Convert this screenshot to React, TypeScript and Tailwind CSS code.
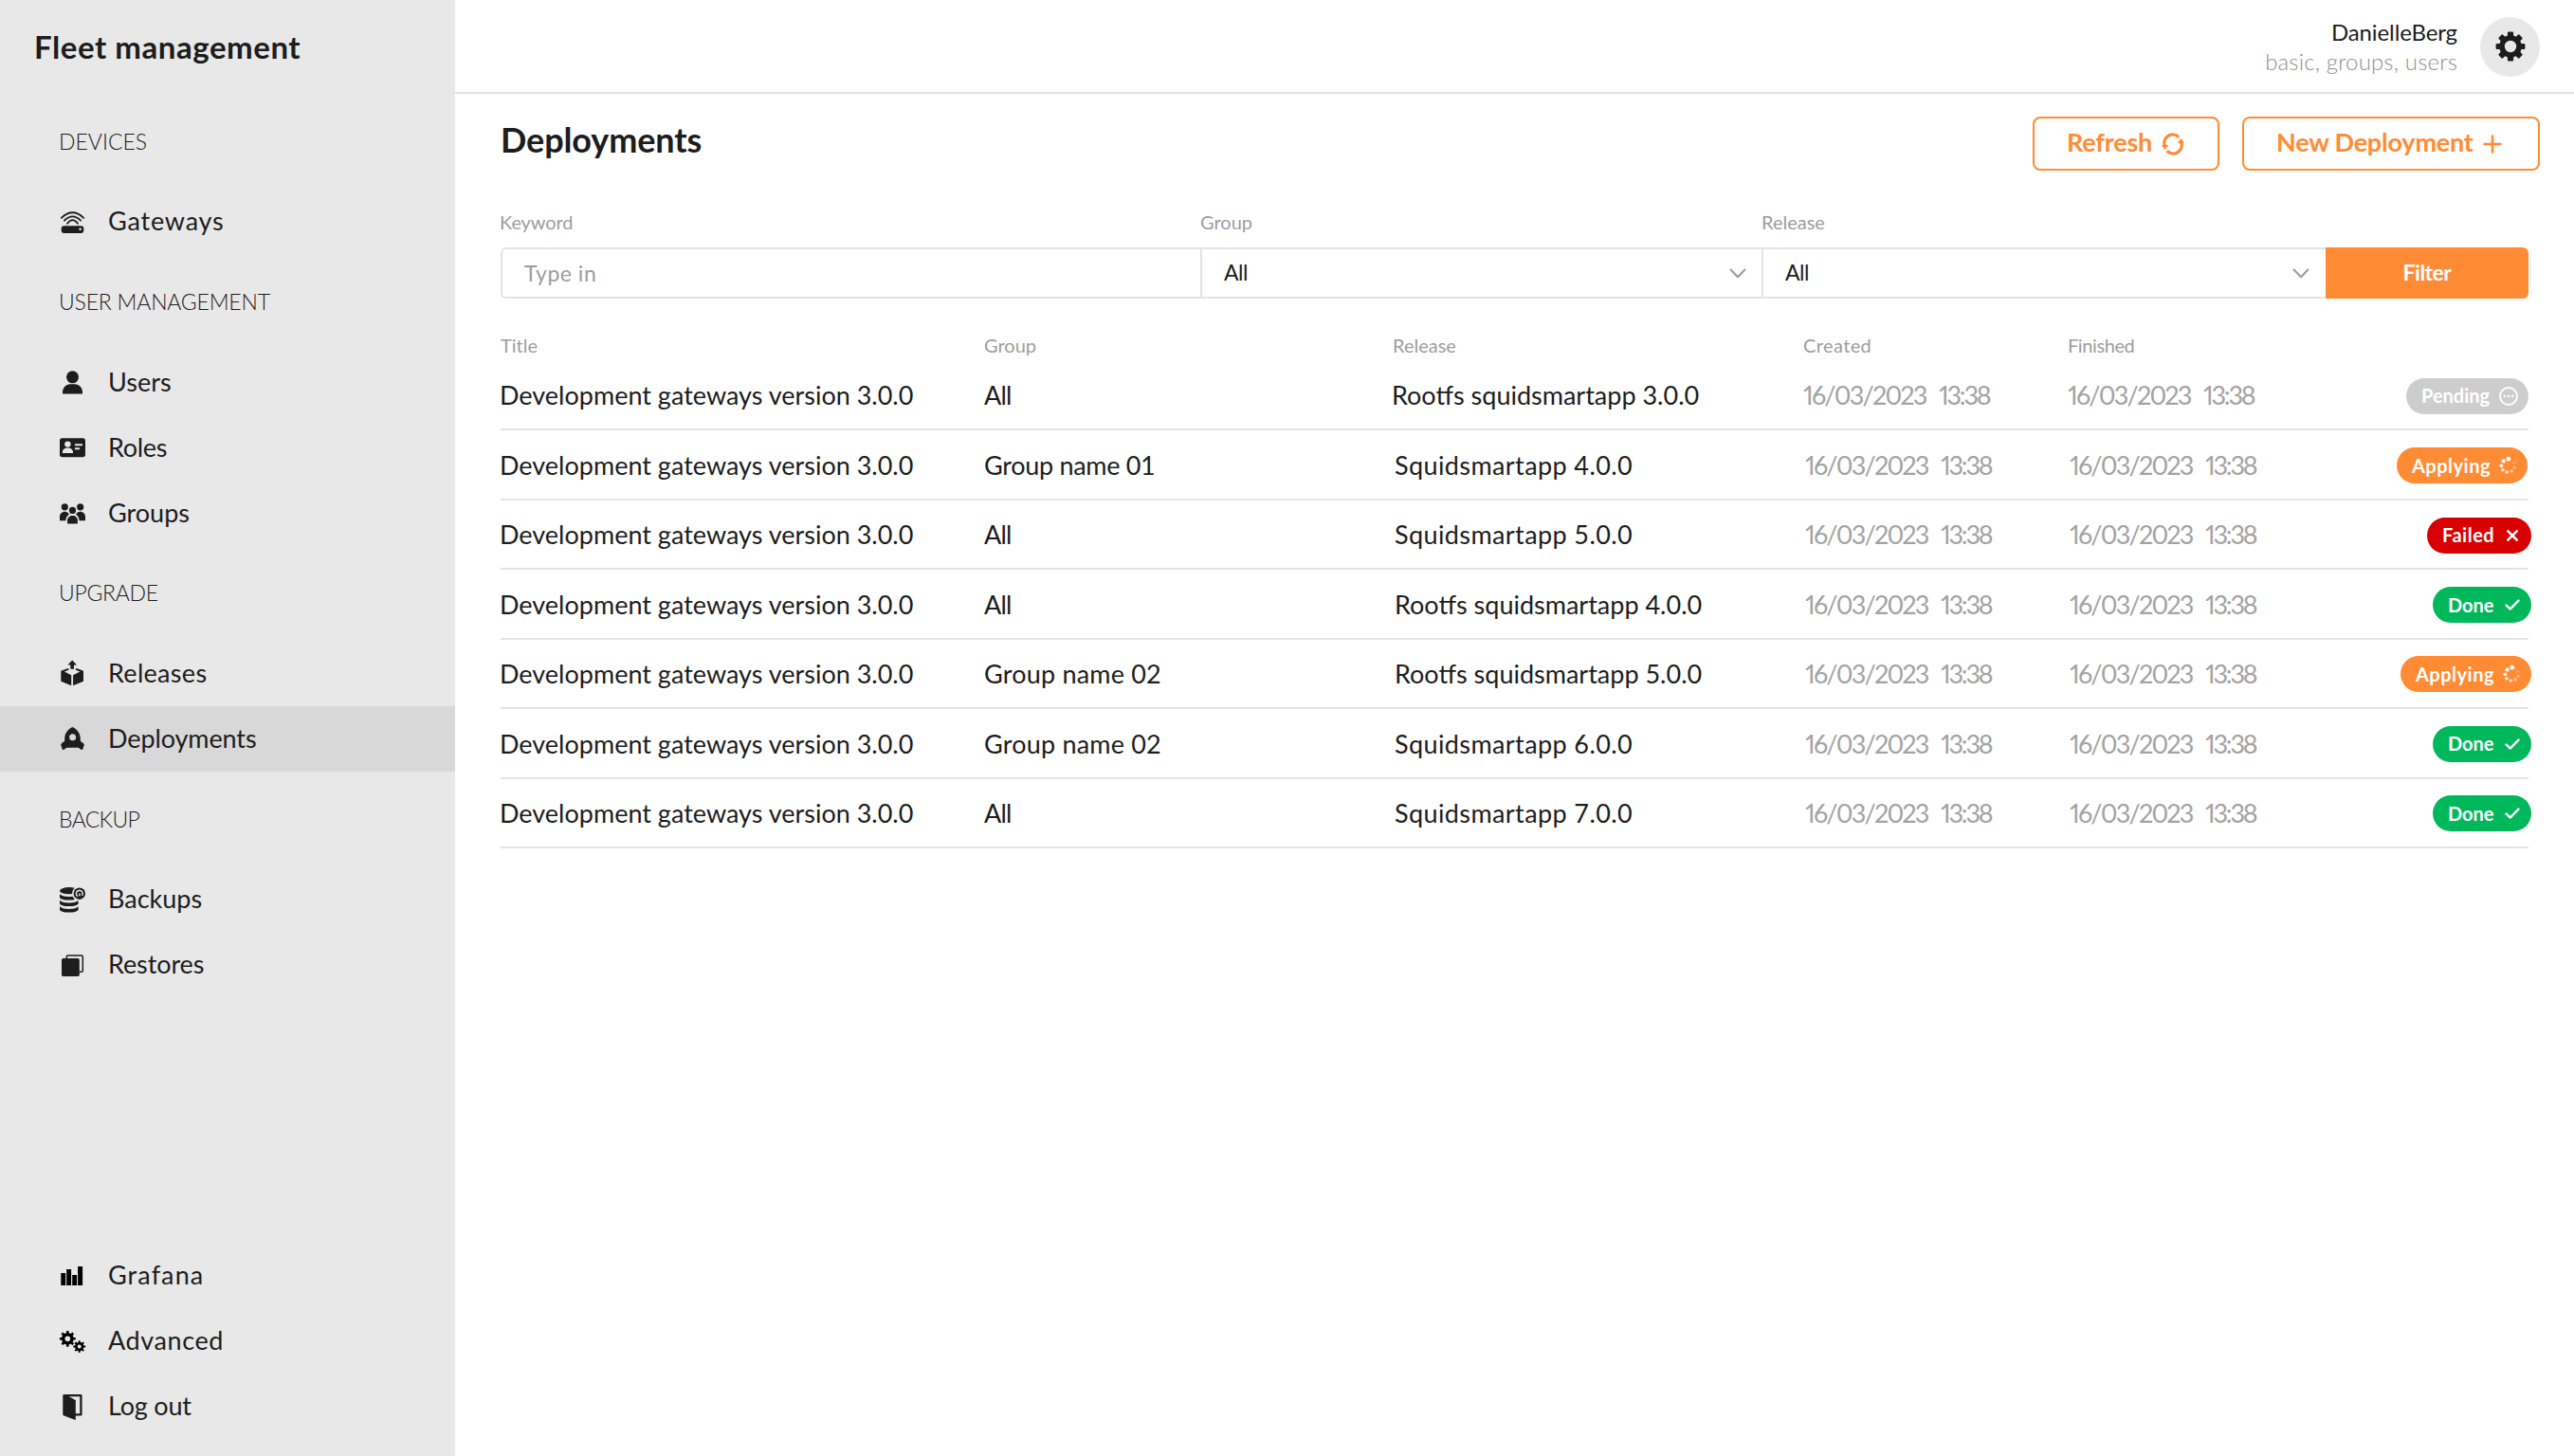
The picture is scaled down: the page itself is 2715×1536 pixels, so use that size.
import type { ReactNode } from "react";

function Icon({ children, black = false }: { children: ReactNode; black?: boolean }) {
  return (
    <svg viewBox="0 0 34 34" className={`h-[34px] w-[34px] shrink-0 ${black ? "text-black" : "text-[#1d1d1d]"}`} fill="currentColor">
      {children}
    </svg>
  );
}

function Gear({ cx, cy, r, body, hole, tooth, holeFill }: { cx: number; cy: number; r: number; body: number; hole: number; tooth: number; holeFill: string }) {
  return (
    <g transform={`translate(${cx} ${cy})`}>
      {[0, 45, 90, 135].map((a) => (
        <rect key={a} x={-tooth / 2} y={-r} width={tooth} height={r * 2} rx={tooth * 0.2} transform={`rotate(${a})`} />
      ))}
      <circle r={body} />
      <circle r={hole} fill={holeFill} />
    </g>
  );
}

const GatewayIcon = (
  <Icon>
    <g fill="none" stroke="currentColor" strokeWidth="1.8" strokeLinecap="round">
      <path d="M4.8 12.8Q16.5 1.7 28.2 12.8" />
      <path d="M7.9 15.7Q16.5 7 25.1 15.7" />
      <path d="M11 18.8Q16.5 11.4 22 18.8" />
    </g>
    <rect x="4.7" y="21.3" width="23.6" height="7.7" rx="3" />
    <circle cx="24.6" cy="24.8" r="1.3" fill="#e8e8e8" />
  </Icon>
);

const UserIcon = (
  <Icon>
    <circle cx="16.5" cy="11.8" r="6.5" />
    <path d="M6 29.6V28C6 22.8 9.6 19.3 14 19.3H19C23.4 19.3 27 22.8 27 28V29.6Z" />
  </Icon>
);

const RoleIcon = (
  <Icon>
    <rect x="3" y="7.2" width="27" height="20" rx="2.7" />
    <g fill="#e8e8e8">
      <circle cx="11.4" cy="13.6" r="3.2" />
      <path d="M5.8 23V22C5.8 19.4 8 17.4 11.4 17.4S17 19.4 17 22V23Z" />
      <rect x="18.9" y="13.3" width="8.2" height="1.9" rx=".6" />
      <rect x="18.9" y="17.3" width="5.2" height="1.9" rx=".6" />
    </g>
  </Icon>
);

const GroupIcon = (
  <Icon>
    <circle cx="8.3" cy="10.8" r="3.6" />
    <circle cx="24.7" cy="10.8" r="3.6" />
    <circle cx="16.5" cy="14.4" r="3.6" />
    <path d="M3 25.2V21.5C3 18 5.4 15.8 8.4 15.8C10.2 15.8 11.4 16.5 12.4 17.8C13 18.5 12.8 19 12 19.6C10.4 20.8 9.5 22.7 9.4 25.2Z" />
    <path d="M30 25.2V21.5C30 18 27.6 15.8 24.6 15.8C22.8 15.8 21.6 16.5 20.6 17.8C20 18.5 20.2 19 21 19.6C22.6 20.8 23.5 22.7 23.6 25.2Z" />
    <path d="M11.1 28.6V25C11.1 22 13.4 20 16.5 20S21.9 22 21.9 25V28.6Z" />
  </Icon>
);

const ReleaseIcon = (
  <Icon>
    <path d="M16.2 3.6L21 8.5H18V12.8H14.3V8.5H11.4Z" />
    <path d="M4.3 14.8L11.6 12L13 13.4L8 15.6L15.2 19.2V30.2L4.3 25.7Z" />
    <path d="M28 14.8L20.7 12L19.3 13.4L24.3 15.6L17.1 19.2V30.2L28 25.7Z" />
  </Icon>
);

const RocketIcon = (
  <Icon>
    <path d="M16.5 5C20.5 6.6 24.8 11 24.8 17.4V19.8L28.3 22.6Q29 23.3 28.7 24.2L27.3 28.2Q26.7 29.6 25.4 28.8L22.7 26.7H10.3L7.6 28.8Q6.3 29.6 5.7 28.2L4.3 24.2Q4 23.3 4.7 22.6L8.2 19.8V17.4C8.2 11 12.5 6.6 16.5 5Z" />
    <circle cx="16.6" cy="15.8" r="3.5" fill="#d8d8d8" />
  </Icon>
);

const BackupIcon = (
  <Icon>
    <ellipse cx="12.8" cy="7.7" rx="9.8" ry="3.6" />
    {[11.2, 17.8, 24.2].map((y) => (
      <path key={y} transform={`translate(0 ${y})`} d="M3 0C5 2.2 9 2.7 12.8 2.7S20.6 2.2 22.6 0V3.2C22.6 5.2 18 6.3 12.8 6.3S3 5.2 3 3.2Z" />
    ))}
    <circle cx="23.8" cy="10.7" r="7.7" fill="#e8e8e8" />
    <circle cx="23.8" cy="10.7" r="6.2" />
    <path d="M21.9 13.6A3.4 3.4 0 1 1 26.5 12.7M23.9 10.4V13.2" fill="none" stroke="#e8e8e8" strokeWidth="1.5" />
  </Icon>
);

const RestoreIcon = (
  <Icon>
    <rect x="5" y="10" width="18.8" height="19" rx="1.7" />
    <path d="M10.3 10V8.2Q10.3 6.9 11.6 6.9H26Q27.3 6.9 27.3 8.2V22.9Q27.3 24.2 26 24.2H23.8" fill="none" stroke="currentColor" strokeWidth="1.5" />
  </Icon>
);

const GrafanaIcon = (
  <Icon black>
    <path d="M4.3 14H9.2V27H4.3ZM10.2 10H15.1V27H10.2ZM16.2 16H21.1V27H16.2ZM22.1 7H27.1V27H22.1Z" />
  </Icon>
);

const AdvancedIcon = (
  <Icon black>
    <Gear cx={11.3} cy={14.3} r={8.4} body={6.3} hole={2.8} tooth={2.6} holeFill="#e8e8e8" />
    <Gear cx={23.7} cy={22.6} r={6.4} body={4.7} hole={2} tooth={2} holeFill="#e8e8e8" />
  </Icon>
);

const LogoutIcon = (
  <Icon>
    <path d="M7.4 5.2H25.4V25.4H19" fill="none" stroke="currentColor" strokeWidth="2.3" strokeLinejoin="round" />
    <path d="M6.3 4.3L12 5.8L19.8 10.3V30.2Q19.8 31.3 18.8 30.8L7 26.3Q6.3 26 6.3 25.2Z" />
  </Icon>
);

type Item = { label: string; icon: ReactNode; track: string; active?: boolean };

const sections: { title: string; track: string; items: Item[] }[] = [
  { title: "DEVICES", track: "", items: [{ label: "Gateways", icon: GatewayIcon, track: "tracking-[0.8px]" }] },
  {
    title: "USER MANAGEMENT",
    track: "tracking-[-0.2px]",
    items: [
      { label: "Users", icon: UserIcon, track: "" },
      { label: "Roles", icon: RoleIcon, track: "tracking-[-0.3px]" },
      { label: "Groups", icon: GroupIcon, track: "" },
    ],
  },
  {
    title: "UPGRADE",
    track: "tracking-[-0.3px]",
    items: [
      { label: "Releases", icon: ReleaseIcon, track: "tracking-[0.3px]" },
      { label: "Deployments", icon: RocketIcon, track: "tracking-[-0.1px]", active: true },
    ],
  },
  {
    title: "BACKUP",
    track: "tracking-[-0.7px]",
    items: [
      { label: "Backups", icon: BackupIcon, track: "" },
      { label: "Restores", icon: RestoreIcon, track: "tracking-[-0.1px]" },
    ],
  },
];

const footerItems: Item[] = [
  { label: "Grafana", icon: GrafanaIcon, track: "tracking-[1.1px]" },
  { label: "Advanced", icon: AdvancedIcon, track: "tracking-[0.6px]" },
  { label: "Log out", icon: LogoutIcon, track: "tracking-[-0.2px]" },
];

function NavItem({ item }: { item: Item }) {
  return (
    <a className={`flex h-[69px] items-center gap-5 pl-[60px] ${item.active ? "bg-[#d8d8d8]" : ""}`}>
      {item.icon}
      <span className={`pb-px text-[27px] leading-8 ${item.track}`}>{item.label}</span>
    </a>
  );
}

type Status = "Pending" | "Applying" | "Failed" | "Done";

const pillClass: Record<Status, string> = {
  Pending: "w-[129px] bg-[#cdcdcd] pr-[11px]",
  Applying: "w-[138px] bg-[#ff8c34] pr-[11px] tracking-[0.5px]",
  Failed: "w-[110px] bg-[#d80000] pr-[14px] tracking-[0.5px]",
  Done: "w-[104px] bg-[#00b85c] pr-[12px]",
};

const spinnerDots = [
  [0.8, -6.8, 2.4, 1],
  [-4.4, -4.6, 2.1, 1],
  [-6.6, 0.3, 1.9, 0.95],
  [-5, 4.8, 1.8, 0.85],
  [-0.8, 7, 1.8, 0.75],
  [4.2, 6, 1.7, 0.5],
  [7, 2.4, 1.6, 0.35],
  [6.6, -2.8, 1.5, 0.2],
];

function StatusIcon({ status }: { status: Status }) {
  if (status === "Pending")
    return (
      <svg viewBox="0 0 20 20" className="size-5">
        <circle cx="10" cy="10" r="9" fill="none" stroke="white" strokeWidth="1.9" />
        <circle cx="5.8" cy="10" r="1.3" fill="white" />
        <circle cx="10" cy="10" r="1.3" fill="white" />
        <circle cx="14.2" cy="10" r="1.3" fill="white" />
      </svg>
    );
  if (status === "Applying")
    return (
      <svg viewBox="-10 -10 20 20" className="size-5">
        {spinnerDots.map(([x, y, r, o], i) => (
          <circle key={i} cx={x} cy={y} r={r} fill="white" opacity={o} />
        ))}
      </svg>
    );
  if (status === "Failed")
    return (
      <svg viewBox="0 0 12 12" className="size-3" stroke="white" strokeWidth="2.5" strokeLinecap="round">
        <path d="M1.3 1.3L10.7 10.7M10.7 1.3L1.3 10.7" />
      </svg>
    );
  return (
    <svg viewBox="0 0 16 12" className="h-3 w-4" fill="none" stroke="white" strokeWidth="2.5" strokeLinecap="round" strokeLinejoin="round">
      <path d="M1.6 6.6L5.8 10.5L14.4 1.6" />
    </svg>
  );
}

const rows: { group: string; release: string; rt: string; status: Status }[] = [
  { group: "All", release: "Rootfs squidsmartapp 3.0.0", rt: "", status: "Pending" },
  { group: "Group name 01", release: "Squidsmartapp 4.0.0", rt: "tracking-[0.4px]", status: "Applying" },
  { group: "All", release: "Squidsmartapp 5.0.0", rt: "tracking-[0.4px]", status: "Failed" },
  { group: "All", release: "Rootfs squidsmartapp 4.0.0", rt: "", status: "Done" },
  { group: "Group name 02", release: "Rootfs squidsmartapp 5.0.0", rt: "", status: "Applying" },
  { group: "Group name 02", release: "Squidsmartapp 6.0.0", rt: "tracking-[0.4px]", status: "Done" },
  { group: "All", release: "Squidsmartapp 7.0.0", rt: "tracking-[0.4px]", status: "Done" },
];

const groupTrack: Record<string, string> = {
  All: "tracking-[-0.8px]",
  "Group name 01": "tracking-[-0.3px]",
  "Group name 02": "tracking-[0.2px]",
};

function DateCell() {
  return (
    <div className="flex text-[27px] text-[#a3a3a3] proportional-nums">
      <span className="w-[143px] tracking-[-1.8px]">16/03/2023</span>
      <span className="tracking-[-2.2px]">13:38</span>
    </div>
  );
}

function Chevron() {
  return (
    <svg viewBox="0 0 18 11" className="h-[11px] w-[18px]" fill="none" stroke="#9d9d9d" strokeWidth="2.2" strokeLinecap="round" strokeLinejoin="round">
      <path d="M1.6 1.6L9 9.2L16.4 1.6" />
    </svg>
  );
}

const columns = "grid grid-cols-[510px_431px_433px_279px_1fr] items-center";

export default function App() {
  return (
    <div className="flex h-[1536px] w-[2715px] overflow-hidden bg-white font-['Lato',sans-serif] text-[#1d1d1d]">
      <aside className="flex w-[480px] flex-col bg-[#e8e8e8] pb-[18px]">
        <div className="flex h-[99px] items-center pt-px pl-[36px] text-[33px] font-bold tracking-[0.55px]">Fleet management</div>
        {sections.map((s) => (
          <nav key={s.title}>
            <div className={`flex h-[100.3px] items-center pl-[62px] text-[23px] font-light ${s.track}`}>{s.title}</div>
            {s.items.map((i) => (
              <NavItem key={i.label} item={i} />
            ))}
          </nav>
        ))}
        <nav className="mt-auto">
          {footerItems.map((i) => (
            <NavItem key={i.label} item={i} />
          ))}
        </nav>
      </aside>

      <main className="flex flex-1 flex-col">
        <header className="flex h-[99px] items-center justify-end gap-6 border-b-2 border-[#e3e3e3] pt-px pr-9">
          <div className="text-right text-[24px] leading-[31px]">
            <div className="tracking-[-0.1px]">DanielleBerg</div>
            <div className="font-light tracking-[0.15px] text-[#8f8f8f]">basic, groups, users</div>
          </div>
          <button className="flex size-[63px] items-center justify-center rounded-full bg-[#e8e8e8]">
            <svg viewBox="-16 -16 32 32" className="size-8 text-[#1d1d1d]" fill="currentColor">
              <Gear cx={0} cy={0} r={15.4} body={11.8} hole={6.2} tooth={6.2} holeFill="#e8e8e8" />
            </svg>
          </button>
        </header>

        <div className="flex items-start justify-between pt-6 pr-9 pl-[48px]">
          <h1 className="mt-[2px] text-[36px] leading-[44px] font-bold tracking-[-0.1px]">Deployments</h1>
          <div className="flex gap-6 text-[27px] font-bold text-[#ff8c34]">
            <button className="flex h-[57px] w-[197px] items-center justify-between rounded-lg border-2 border-[#ff8c34] pr-[35px] pl-[34px]">
              <span className="pb-0.5 tracking-[-0.2px]">Refresh</span>
              <svg viewBox="-12 -12 24 24" className="size-6" fill="none" stroke="currentColor" strokeWidth="3.3">
                <path d="M-8.8 1.5A8.9 8.9 0 0 1 6.2 -7.2" />
                <path d="M8.8 -1.5A8.9 8.9 0 0 1 -6.2 7.2" />
                <path d="M-12 1H-4.6L-8.6 6ZM12 -1H4.6L8.6 -6Z" fill="currentColor" stroke="none" />
              </svg>
            </button>
            <button className="flex h-[57px] w-[314px] items-center justify-between rounded-lg border-2 border-[#ff8c34] pr-[38px] pl-[34px]">
              <span className="pb-0.5 tracking-[-0.2px]">New Deployment</span>
              <svg viewBox="0 0 20 20" className="size-5" stroke="currentColor" strokeWidth="2.7" strokeLinecap="round">
                <path d="M1.6 10H18.4M10 1.6V18.4" />
              </svg>
            </button>
          </div>
        </div>

        <section className="pr-12 pl-[48px]">
          <div className="mt-[41px] grid grid-cols-[738px_592px_595px_214px] text-[20px] leading-[26px] text-[#9d9d9d]">
            <span className="-ml-px tracking-[-0.1px]">Keyword</span>
            <span>Group</span>
            <span>Release</span>
          </div>
          <div className="mt-[14px] grid h-[54px] grid-cols-[738px_592px_595px_214px] text-[23px]">
            <div className="flex items-center rounded-l-md border-2 border-r-0 border-[#e3e3e3] pl-[23px] tracking-[0.5px] text-[#9d9d9d]">Type in</div>
            <div className="flex items-center justify-between border-2 border-r-0 border-[#e3e3e3] pr-[16px] pl-[23px]">
              <span className="pb-px tracking-[-0.5px]">All</span>
              <Chevron />
            </div>
            <div className="flex items-center justify-between border-y-2 border-l-2 border-[#e3e3e3] pr-[17px] pl-[23px]">
              <span className="pb-px tracking-[-0.5px]">All</span>
              <Chevron />
            </div>
            <button className="rounded-r-md bg-[#ff8c34] pb-px font-bold tracking-[-0.5px] text-white">Filter</button>
          </div>

          <div className={`${columns} mt-[34px] h-[26px] text-[20px] text-[#9d9d9d]`}>
            <span>Title</span>
            <span>Group</span>
            <span>Release</span>
            <span className="tracking-[0.4px]">Created</span>
            <span className="tracking-[-0.4px]">Finished</span>
          </div>
          <div className="mt-[6px]">
            {rows.map((r, i) => (
              <div key={i} className={`${columns} h-[73.45px] border-b-2 border-[#e3e3e3] pt-[2px] text-[27px]`}>
                <span className="-ml-px">Development gateways version 3.0.0</span>
                <span className={groupTrack[r.group]}>{r.group}</span>
                <span className={`${r.rt} ${i > 0 ? "pl-[2px]" : "-ml-px"}`}>{r.release}</span>
                <div className={i > 0 ? "pl-0.5" : ""}>
                  <DateCell />
                </div>
                <div className="flex items-center justify-between">
                  <div className={i > 0 ? "pl-0.5" : ""}>
                    <DateCell />
                  </div>
                  <div
                    className={`flex h-[38px] items-center justify-between rounded-full pl-4 text-[20px] font-bold text-white ${pillClass[r.status]} ${i === 1 ? "mr-px" : i > 1 ? "-mr-[3px]" : ""}`}
                  >
                    <span className="pb-px leading-6">{r.status}</span>
                    <StatusIcon status={r.status} />
                  </div>
                </div>
              </div>
            ))}
          </div>
        </section>
      </main>
    </div>
  );
}
